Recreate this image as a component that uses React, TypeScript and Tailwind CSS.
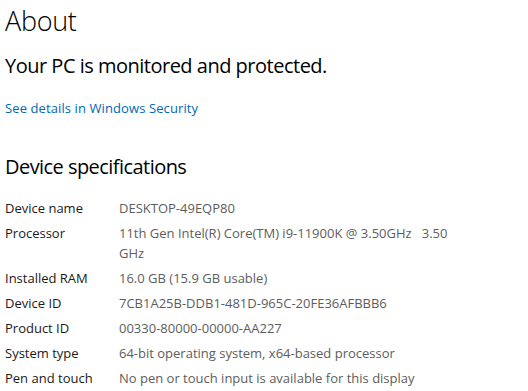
const specs: [string, string][] = [
  ['Device name', 'DESKTOP-49EQP80'],
  ['Processor', '11th Gen Intel(R) Core(TM) i9-11900K @ 3.50GHz\u00a0\u00a0 3.50 GHz'],
  ['Installed RAM', '16.0 GB (15.9 GB usable)'],
  ['Device ID', '7CB1A25B-DDB1-481D-965C-20FE36AFBBB6'],
  ['Product ID', '00330-80000-00000-AA227'],
  ['System type', '64-bit operating system, x64-based processor'],
  ['Pen and touch', 'No pen or touch input is available for this display'],
];

export default function App() {
  return (
    <div
      className="w-[528px] h-[391px] overflow-hidden bg-white pl-[5px] text-black"
      style={{ fontFamily: '"Open Sans", "Noto Sans", sans-serif' }}
    >
      <h1 className="text-[27px] leading-[36px] font-light mt-[3px] tracking-[-0.3px]">About</h1>
      <p className="text-[20px] leading-[28px] mt-[13px] tracking-[-0.5px]">
        Your PC is monitored and protected.
      </p>
      <a className="block text-[13px] leading-[18px] mt-[19px] text-[#0067b8] tracking-[0.1px] cursor-pointer">
        See details in Windows Security
      </a>
      <h2 className="text-[20px] leading-[28px] mt-[36px] tracking-[-0.55px]">Device specifications</h2>
      <div className="mt-[17px] grid grid-cols-[114px_345px] text-[13px] leading-[20px]">
        {specs.map(([label, value]) => (
          <div key={label} className="contents">
            <div className="pb-[5px] text-[#1a1a1a]">{label}</div>
            <div className="pb-[5px] text-[#5d5d5d]">{value}</div>
          </div>
        ))}
      </div>
    </div>
  );
}
